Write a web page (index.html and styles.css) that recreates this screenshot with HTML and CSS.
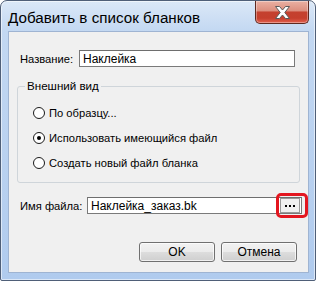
FILE: index.html
```html
<!DOCTYPE html>
<html lang="ru">
  <head>
    <meta charset="UTF-8" />
    <title>Добавить в список бланков</title>
    <link rel="stylesheet" href="styles.css">
  </head>
  <body>
    <div class="window">
      <div class="titlebar">
        <span class="title">Добавить в список бланков</span>
        <div class="close">
          <svg width="15" height="13" viewBox="0 0 15 13">
            <polygon points="0.5,0.5 4.5,0.5 7.5,4 10.5,0.5 14.5,0.5 9.8,6.5 14.5,12.5 10.5,12.5 7.5,9 4.5,12.5 0.5,12.5 5.2,6.5"
                     fill="#fff" stroke="#5a5a5a" stroke-width="1" stroke-linejoin="round" />
          </svg>
        </div>
      </div>

      <div class="client">
        <div class="row name-row">
          <span class="label">Название:</span>
          <div class="field name-field">Наклейка</div>
        </div>

        <fieldset class="group">
          <legend>Внешний вид</legend>
          <div class="option"><span class="radio"></span>По образцу...</div>
          <div class="option"><span class="radio checked"></span>Использовать имеющийся файл</div>
          <div class="option"><span class="radio"></span>Создать новый файл бланка</div>
        </fieldset>

        <div class="row file-row">
          <span class="label">Имя файла:</span>
          <div class="field file-field">
            <span class="value">Наклейка_заказ.bk</span>
            <span class="browse">
              <svg width="10" height="2" viewBox="0 0 10 2">
                <rect x="0" y="0" width="2" height="2" fill="#000" />
                <rect x="4" y="0" width="2" height="2" fill="#000" />
                <rect x="8" y="0" width="2" height="2" fill="#000" />
              </svg>
            </span>
            <span class="highlight"></span>
          </div>
        </div>

        <div class="buttons">
          <div class="btn">OK</div>
          <div class="btn">Отмена</div>
        </div>
      </div>
    </div>
  </body>
</html>
```

FILE: styles.css
```css
body {
  margin: 0;
  font-family: "Liberation Sans", Arial, sans-serif;
  font-size: 11.2px;
  color: #000;
}

.window {
  width: 316px;
  height: 281px;
  box-sizing: border-box;
  border: 1px solid #4f5f78;
  border-radius: 7px 7px 2px 2px;
  background: linear-gradient(to bottom, #dbe8f7 0, #c3d8f2 30px, #b0cbee 100%);
  box-shadow: inset 0 0 0 1px rgba(255, 255, 255, 0.55);
  padding: 0 6px 7px 7px;
  display: flex;
  flex-direction: column;
}

.titlebar {
  height: 30px;
  display: flex;
  align-items: center;
  justify-content: space-between;
  margin-right: -6px;
}

.title {
  font-size: 15.2px;
  padding-top: 3px;
  color: #000;
}

.close {
  align-self: flex-start;
  width: 54px;
  height: 23px;
  box-sizing: border-box;
  margin-right: 6px;
  border: 1px solid #5e2920;
  border-top: none;
  border-radius: 0 0 5px 5px;
  background: linear-gradient(to bottom, #eab1a3 0, #dc8e7e 45%, #c4412f 50%, #c53f2d 78%, #e2604f 100%);
  box-shadow: inset 0 0 0 1px rgba(255, 255, 255, 0.35);
  display: flex;
  align-items: center;
  justify-content: center;
}

.client {
  flex: 1;
  background: #f0f0f0;
  border: 1px solid #9fb4d2;
  padding: 18px 0 0 8px;
  display: flex;
  flex-direction: column;
}

.row {
  display: flex;
  align-items: center;
  height: 17px;
  margin-left: 3px;
}

.name-row .label {
  width: 59px;
}

.file-row .label {
  width: 67px;
}

.field {
  height: 17px;
  box-sizing: border-box;
  border: 1px solid #7a7a7a;
  border-top-color: #6e6e6e;
  background: #fff;
  padding-left: 3px;
  display: flex;
  align-items: center;
  font-size: 12px;
}

.name-field {
  width: 216px;
}

.file-field {
  width: 215px;
  position: relative;
  padding-right: 1px;
}

.value {
  flex: 1;
}

.browse {
  width: 20px;
  height: 15px;
  box-sizing: border-box;
  border: 1px solid #9a9a9a;
  background: #f0f0f0;
  display: flex;
  align-items: center;
  justify-content: center;
}

.highlight {
  position: absolute;
  left: 188px;
  top: -5px;
  width: 32px;
  height: 25px;
  box-sizing: border-box;
  border: 3px solid #e3161f;
  border-radius: 5px;
}

.group {
  width: 283px;
  box-sizing: border-box;
  margin: 12px 0 0 0;
  padding: 7px 0 7px 0;
  border: 1px solid #cfd5da;
  border-radius: 3px;
}

.group legend {
  margin-left: 7px;
  padding: 0 2px;
  line-height: 14px;
  font-size: 11.6px;
}

.option {
  height: 25px;
  display: flex;
  align-items: center;
  padding-left: 15px;
}

.radio {
  width: 12px;
  height: 12px;
  box-sizing: border-box;
  border: 1px solid #1a1a1a;
  border-radius: 50%;
  background: #fff;
  margin-right: 4px;
  display: flex;
  align-items: center;
  justify-content: center;
}

.radio.checked::after {
  content: "";
  width: 4px;
  height: 4px;
  border-radius: 50%;
  background: #000;
}

.file-row {
  margin-top: 14px;
}

.buttons {
  display: flex;
  justify-content: flex-end;
  gap: 6px;
  margin-top: 28px;
  padding-right: 11px;
}

.btn {
  width: 76px;
  height: 20px;
  box-sizing: border-box;
  border: 1px solid #707070;
  border-radius: 3px;
  background: linear-gradient(to bottom, #f2f2f2 0, #ebebeb 50%, #dddddd 50%, #cfcfcf 100%);
  box-shadow: inset 0 0 0 1px rgba(255, 255, 255, 0.7);
  display: flex;
  align-items: center;
  justify-content: center;
  font-size: 12px;
}
```
